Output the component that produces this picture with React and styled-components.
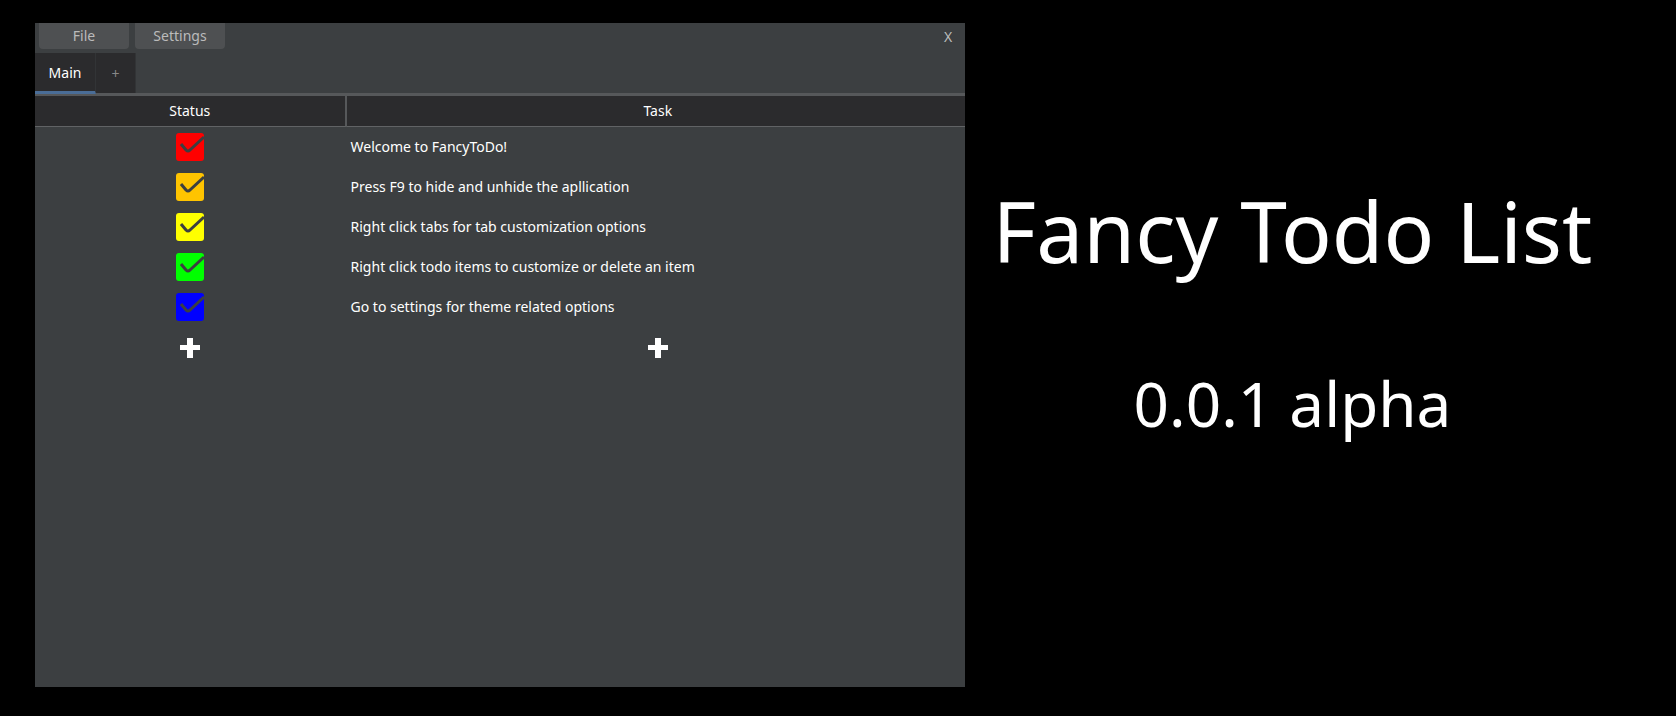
import React, { useState } from "react";
import styled, { createGlobalStyle } from "styled-components";

const GlobalStyle = createGlobalStyle`
  * { box-sizing: border-box; }
  body { margin: 0; background: #000; }
  button { font: inherit; border: 0; margin: 0; padding: 0; cursor: pointer; }
`;

const Page = styled.div`
  min-height: 100vh;
  display: flex;
  padding: 23px 56px 29px 35px;
  background: #000;
  color: #fff;
  font: 14px/20px "Noto Sans", "Open Sans", sans-serif;
`;

const AppWindow = styled.main`
  flex: 930 1 0;
  min-width: 0;
  background: #3c3f41;
`;

const MenuBar = styled.header`
  display: flex;
  gap: 6px;
  height: 30px;
  padding: 0 4px;
`;

const MenuButton = styled.button`
  width: 90px;
  height: 26px;
  border-radius: 0 0 4px 4px;
  background: #4e5052;
  color: #bbb;
`;

const CloseButton = styled.button`
  width: 26px;
  height: 28px;
  margin-left: auto;
  background: transparent;
  color: #bbb;
`;

const TabStrip = styled.div`
  display: flex;
  height: 43px;
  border-bottom: 3px solid #56585a;
`;

const Tab = styled.button`
  width: ${({ $active }) => ($active ? 61 : 40)}px;
  height: ${({ $active }) => ($active ? 41 : 40)}px;
  padding-top: 2px;
  border-right: 1px solid #323436;
  border-bottom: ${({ $active }) => ($active ? "3px solid #4a6d97" : "0")};
  background: #2b2b2d;
  color: ${({ $active }) => ($active ? "#fff" : "#888")};
`;

const TaskTable = styled.table`
  width: 100%;
  table-layout: fixed;
  border-collapse: separate;
  border-spacing: 0;
`;

const HeadCell = styled.th`
  width: ${({ $width }) => $width || "auto"};
  height: 31px;
  padding: ${({ $divided }) => ($divided ? "0" : "0 0 0 4px")};
  background: #2b2b2d;
  border-bottom: 1px solid #616365;
  border-right: ${({ $divided }) => ($divided ? "2px solid #56585a" : "0")};
  font-weight: 400;
`;

const StatusCell = styled.td`
  height: 40px;
  padding: 0 2px 0 0;
  text-align: center;
`;

const TaskCell = styled.td`
  height: 40px;
  padding: 0 0 0 4px;
  text-align: ${({ $centered }) => ($centered ? "center" : "left")};
`;

const StatusLabel = styled.label`
  display: inline-grid;
  vertical-align: middle;
  cursor: pointer;
  > * { grid-area: 1 / 1; }
`;

const StatusInput = styled.input`
  appearance: none;
  width: 28px;
  height: 28px;
  margin: 0;
  border-radius: 3px;
  background: ${({ $color }) => $color};
`;

const Mark = styled.svg`
  width: 28px;
  height: 28px;
  pointer-events: none;
`;

const AddButton = styled.button`
  display: inline-flex;
  vertical-align: middle;
  background: transparent;
  color: #fff;
`;

const Caption = styled.aside`
  flex: 655 1 0;
  min-width: 0;
  display: flex;
  flex-direction: column;
  align-items: center;
  gap: 72px;
  padding-top: 153px;
  white-space: nowrap;
`;

const Title = styled.h1`
  margin: 0;
  font-size: 84px;
  line-height: 110px;
  font-weight: 400;
`;

const Version = styled.p`
  margin: 0;
  font-size: 62px;
  line-height: 90px;
`;

const tasks = [
  ["#ff0000", "Welcome to FancyToDo!"],
  ["#ffc400", "Press F9 to hide and unhide the apllication"],
  ["#ffff00", "Right click tabs for tab customization options"],
  ["#00ff00", "Right click todo items to customize or delete an item"],
  ["#0000ff", "Go to settings for theme related options"],
];

function Status({ color, task }) {
  const [done, setDone] = useState(true);
  return (
    <StatusLabel>
      <StatusInput
        type="checkbox"
        aria-label={task}
        checked={done}
        onChange={() => setDone(!done)}
        $color={color}
      />
      {done && (
        <Mark viewBox="0 0 28 28" fill="none" stroke="#3c3f41" strokeWidth="3">
          <path d="M5 11L10 17Q12 19 14 17L28 4" />
        </Mark>
      )}
    </StatusLabel>
  );
}

function Add({ label }) {
  return (
    <AddButton aria-label={label}>
      <svg width="20" height="20" viewBox="0 0 20 20" fill="currentColor">
        <path d="M7 0h6v7h7v5h-7v8H7v-8H0V7h7z" />
      </svg>
    </AddButton>
  );
}

export default function App() {
  return (
    <Page>
      <GlobalStyle />
      <AppWindow>
        <MenuBar>
          <MenuButton>File</MenuButton>
          <MenuButton>Settings</MenuButton>
          <CloseButton>X</CloseButton>
        </MenuBar>
        <TabStrip>
          <Tab $active>Main</Tab>
          <Tab>+</Tab>
        </TabStrip>
        <TaskTable>
          <thead>
            <tr>
              <HeadCell $width="33.5%" $divided>Status</HeadCell>
              <HeadCell>Task</HeadCell>
            </tr>
          </thead>
          <tbody>
            {tasks.map(([color, task]) => (
              <tr key={task}>
                <StatusCell><Status color={color} task={task} /></StatusCell>
                <TaskCell>{task}</TaskCell>
              </tr>
            ))}
            <tr>
              <StatusCell><Add label="Add status" /></StatusCell>
              <TaskCell $centered><Add label="Add task" /></TaskCell>
            </tr>
          </tbody>
        </TaskTable>
      </AppWindow>
      <Caption>
        <Title>Fancy Todo List</Title>
        <Version>0.0.1 alpha</Version>
      </Caption>
    </Page>
  );
}
